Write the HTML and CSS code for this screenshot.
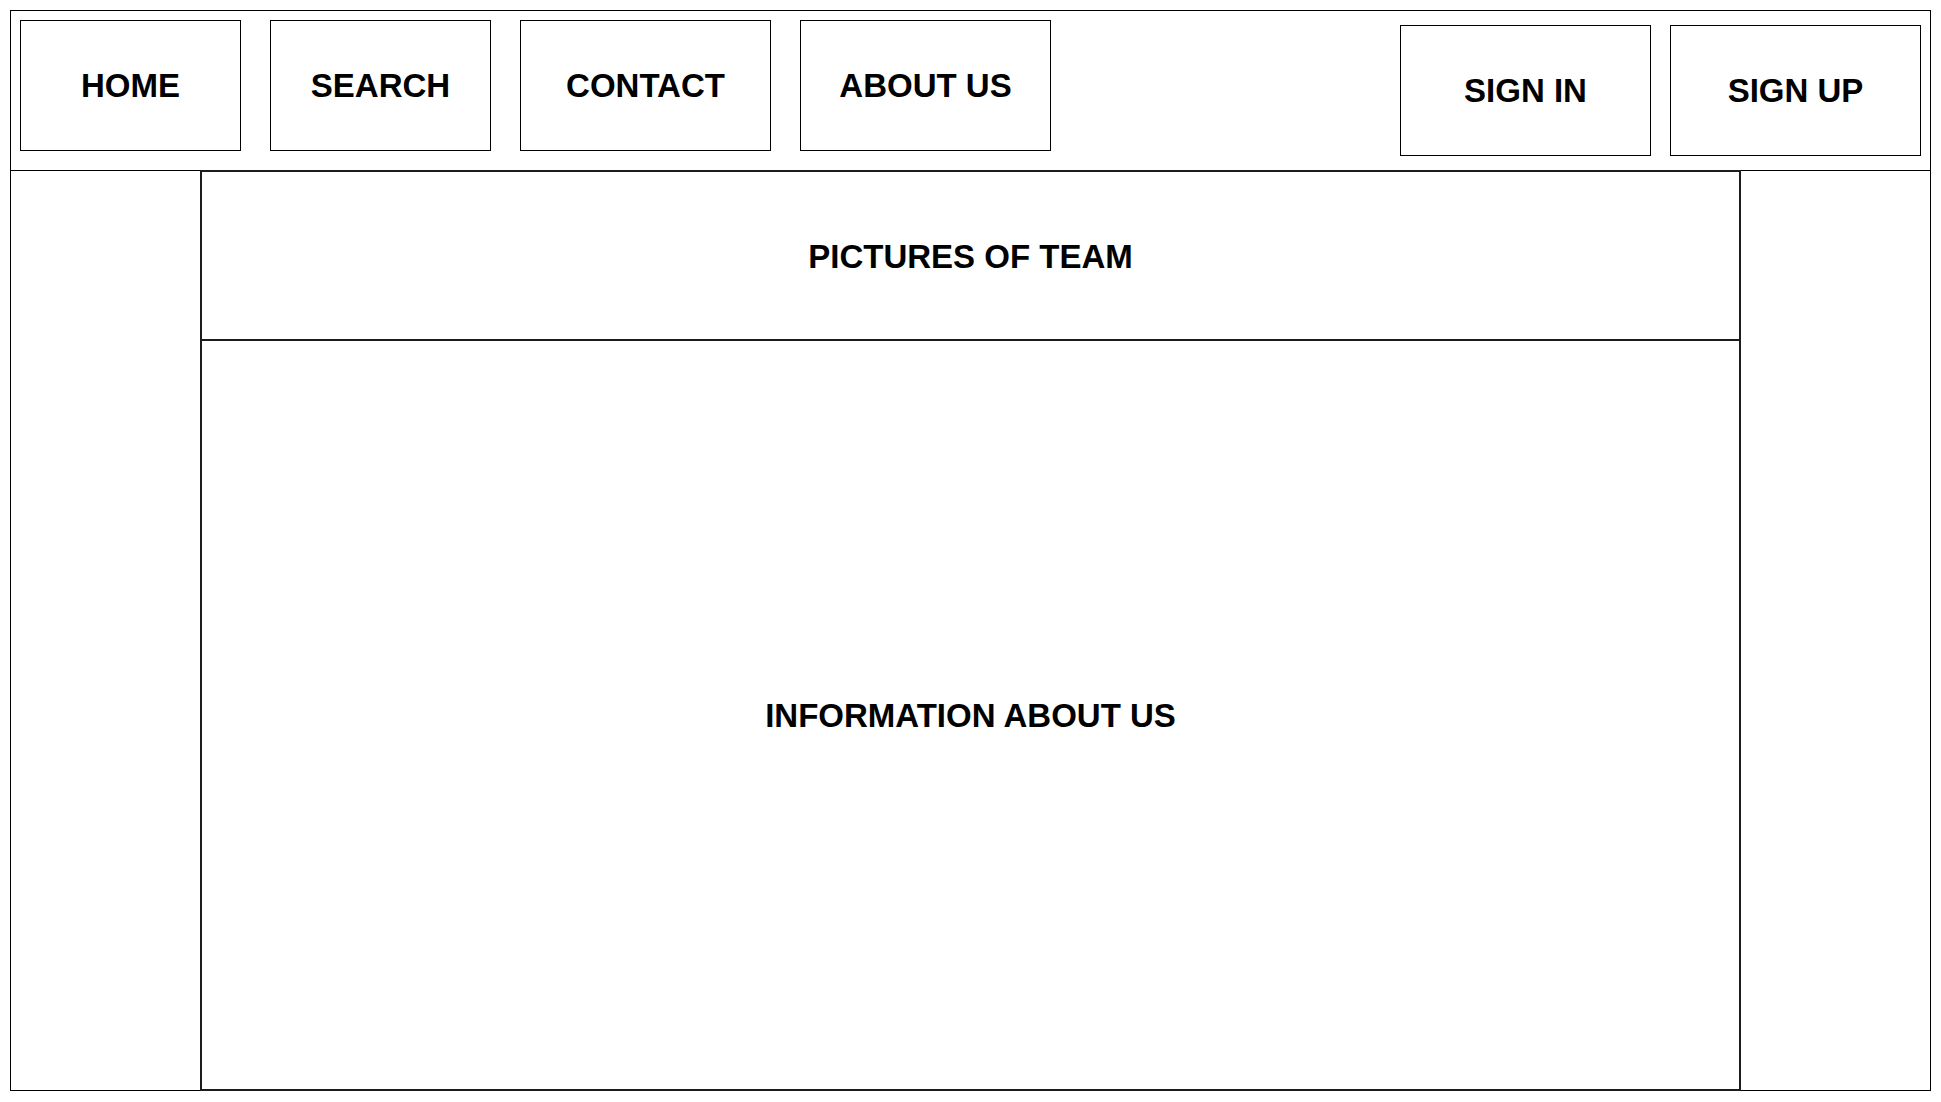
FILE: index.html
```html
<!DOCTYPE html>
<html lang="en">
<head>
<meta charset="utf-8">
<title>About Us</title>
<link rel="stylesheet" href="styles.css">
</head>
<body>
<div class="frame">
  <header class="header">
    <nav class="nav-left">
      <div class="btn btn-s">HOME</div>
      <div class="btn btn-s">SEARCH</div>
      <div class="btn btn-l">CONTACT</div>
      <div class="btn btn-l">ABOUT US</div>
    </nav>
    <div class="nav-right">
      <div class="btn btn-l">SIGN IN</div>
      <div class="btn btn-l">SIGN UP</div>
    </div>
  </header>
  <main class="content">
    <section class="panel">
      <div class="panel-top">PICTURES OF TEAM</div>
      <div class="panel-bottom">INFORMATION ABOUT US</div>
    </section>
  </main>
</div>
</body>
</html>
```

FILE: styles.css
```css
* { box-sizing: border-box; }

html, body {
  margin: 0;
  padding: 0;
  background: #ffffff;
}

body {
  font-family: "Liberation Sans", Arial, Helvetica, sans-serif;
  color: #000;
  padding: 10px 0 0 10px;
}

.frame {
  width: 1921px;
  height: 1081px;
  border: 1px solid #000;
  display: flex;
  flex-direction: column;
}

.header {
  height: 160px;
  border-bottom: 1px solid #000;
  padding: 9px 9px 0 9px;
  display: flex;
  justify-content: space-between;
  align-items: flex-start;
  flex-shrink: 0;
}

.nav-left {
  display: flex;
  gap: 29px;
}

.nav-right {
  display: flex;
  gap: 19px;
  margin-top: 5px;
}

.btn {
  height: 131px;
  border: 1px solid #000;
  display: flex;
  align-items: center;
  justify-content: center;
  font-size: 33px;
  font-weight: 700;
  white-space: nowrap;
  padding-top: 1px;
}

.btn-s { width: 221px; }
.btn-l { width: 251px; }

.content {
  flex: 1;
  display: flex;
  padding-left: 189px;
  margin-top: -1px;
  margin-bottom: -1px;
}

.panel {
  width: 1541px;
  height: 921px;
  border: 2px solid #1c1c1c;
  display: flex;
  flex-direction: column;
}

.panel-top {
  height: 169px;
  border-bottom: 2px solid #1c1c1c;
  display: flex;
  align-items: center;
  justify-content: center;
  font-size: 33px;
  font-weight: 700;
  padding-top: 2px;
}

.panel-bottom {
  flex: 1;
  display: flex;
  align-items: center;
  justify-content: center;
  font-size: 33px;
  font-weight: 700;
  padding-top: 2px;
}
```
